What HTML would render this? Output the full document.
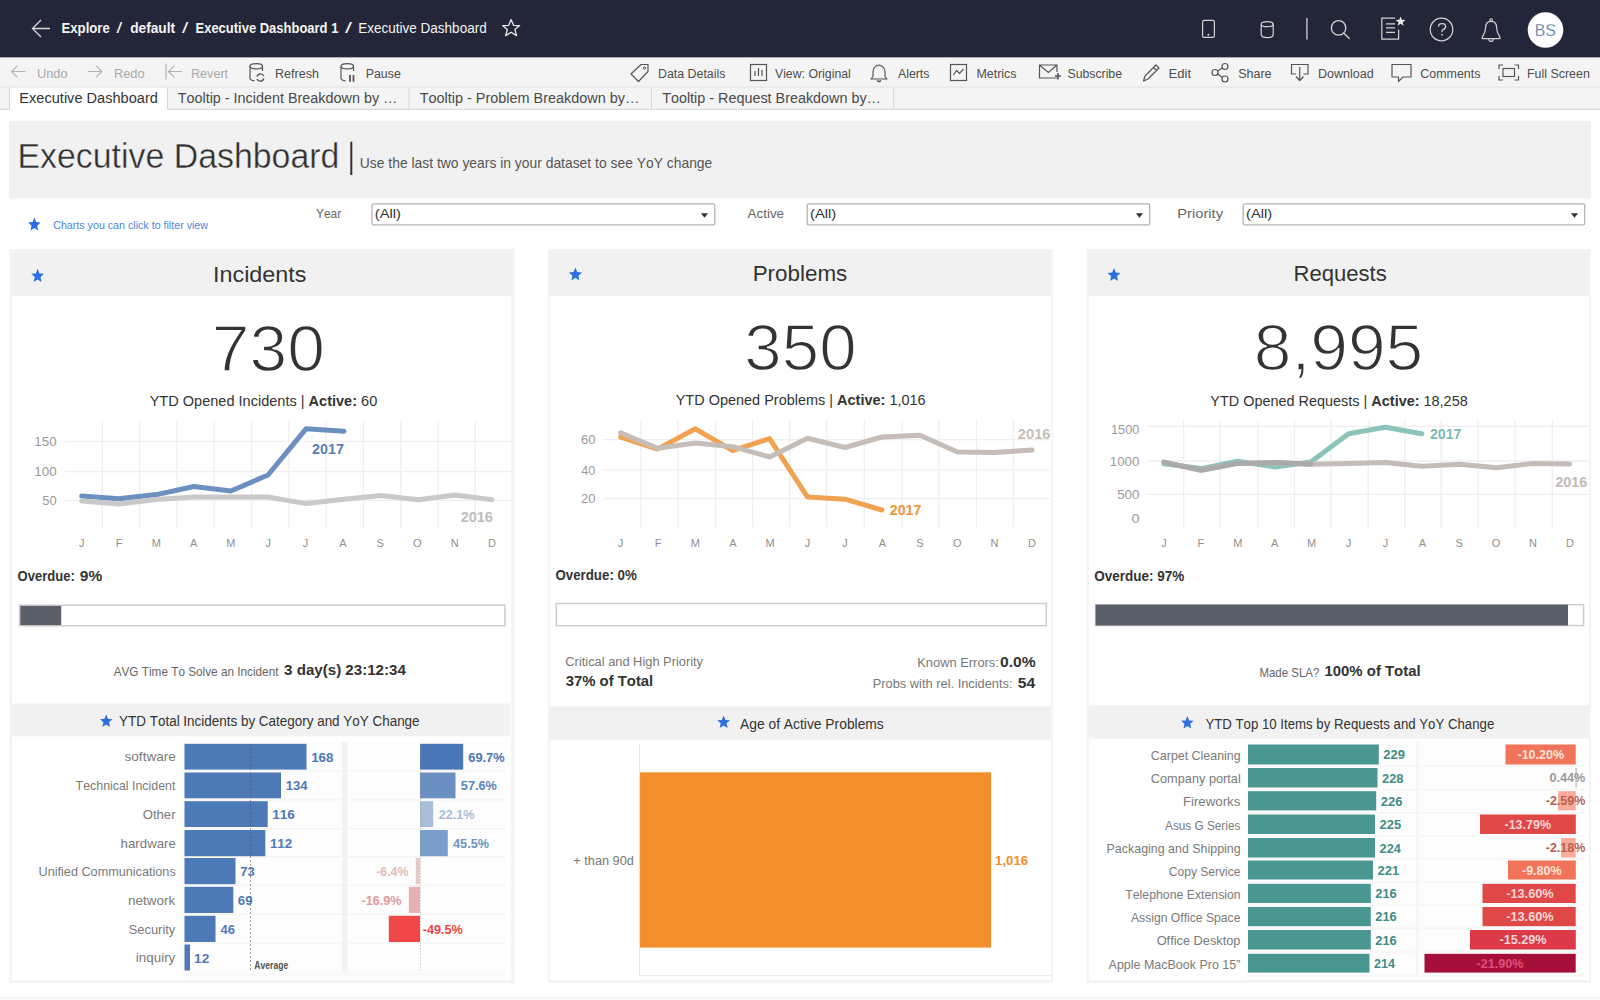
<!DOCTYPE html><html><head><meta charset="utf-8"><title>Executive Dashboard</title>
<style>html,body{margin:0;padding:0;background:#fff;width:1600px;height:1000px;overflow:hidden}svg{display:block;font-family:"Liberation Sans",sans-serif;font-kerning:none}</style></head><body>
<svg width="1600" height="1000" viewBox="0 0 1600 1000">
<rect x="0.0" y="0.0" width="1600.0" height="57.6" fill="#232638"/>
<path d="M50 28.5 H33 M41 20 L32.5 28.5 L41 37" fill="none" stroke="#d8d8d8" stroke-width="1.3"/>
<text x="61.52" y="33.20" font-size="14" fill="#f4f4f4" font-weight="bold" text-anchor="start" textLength="48.23" lengthAdjust="spacingAndGlyphs">Explore</text>
<text x="116.60" y="33.20" font-size="14" fill="#f4f4f4" font-weight="normal" text-anchor="start" textLength="5.70" lengthAdjust="spacingAndGlyphs">/</text>
<text x="130.14" y="33.20" font-size="14" fill="#f4f4f4" font-weight="bold" text-anchor="start" textLength="45.03" lengthAdjust="spacingAndGlyphs">default</text>
<text x="182.00" y="33.20" font-size="14" fill="#f4f4f4" font-weight="normal" text-anchor="start" textLength="6.30" lengthAdjust="spacingAndGlyphs">/</text>
<text x="195.53" y="33.20" font-size="14" fill="#f4f4f4" font-weight="bold" text-anchor="start" textLength="142.83" lengthAdjust="spacingAndGlyphs">Executive Dashboard 1</text>
<text x="345.00" y="33.20" font-size="14" fill="#f4f4f4" font-weight="normal" text-anchor="start" textLength="7.00" lengthAdjust="spacingAndGlyphs">/</text>
<text x="358.29" y="33.20" font-size="14" fill="#f4f4f4" font-weight="normal" text-anchor="start" textLength="128.38" lengthAdjust="spacingAndGlyphs">Executive Dashboard</text>
<path d="M511.1 19.5 L513.5 25.3 L519.6 25.6 L514.9 29.5 L516.5 35.6 L511.1 32.2 L505.7 35.6 L507.3 29.5 L502.6 25.6 L508.7 25.3 Z" fill="none" stroke="#e6e6e6" stroke-width="1.3" stroke-linejoin="round"/>
<rect x="1202.6" y="20.4" width="11.8" height="17" rx="1.6" fill="none" stroke="#d4d4d4" stroke-width="1.2"/><circle cx="1208.4" cy="34.8" r="0.95" fill="#d4d4d4"/>
<path d="M1261.2 24.5 V34.6 Q1261.2 37.6 1267.2 37.6 Q1273.2 37.6 1273.2 34.6 V24.5" fill="none" stroke="#d4d4d4" stroke-width="1.2"/><ellipse cx="1267.2" cy="24.2" rx="6" ry="2.5" fill="none" stroke="#d4d4d4" stroke-width="1.2"/>
<line x1="1306.9" y1="18.0" x2="1306.9" y2="39.6" stroke="#d4d4d4" stroke-width="1.3"/>
<circle cx="1338.6" cy="27.9" r="7.2" fill="none" stroke="#d4d4d4" stroke-width="1.3"/><path d="M1343.8 33.2 L1349.6 38.8" stroke="#d4d4d4" stroke-width="1.4"/>
<path d="M1395 18.2 H1381.8 V39.2 H1398.6 V29.5" fill="none" stroke="#d4d4d4" stroke-width="1.2"/><path d="M1386 23.8 H1395 M1386 27.9 H1395 M1386 32.3 H1395" stroke="#d4d4d4" stroke-width="1.3"/>
<polygon points="1400.60,16.40 1401.89,19.82 1405.55,19.99 1402.69,22.28 1403.66,25.81 1400.60,23.80 1397.54,25.81 1398.51,22.28 1395.65,19.99 1399.31,19.82" fill="#e8e8e8"/>
<circle cx="1441.5" cy="29.5" r="11.3" fill="none" stroke="#d4d4d4" stroke-width="1.2"/><path d="M1438.6 26.6 Q1438.4 23.6 1442 23.6 Q1445.6 23.6 1445.6 26.4 Q1445.6 28.4 1442.6 29.8 Q1442 30.2 1442 32.2" fill="none" stroke="#d4d4d4" stroke-width="1.3"/><circle cx="1442" cy="34.8" r="0.9" fill="#d4d4d4"/>
<circle cx="1491.1" cy="20" r="1.3" fill="none" stroke="#d4d4d4" stroke-width="1.1"/><path d="M1483.2 38.6 Q1481.3 38.6 1482.6 36.6 Q1485.6 32.4 1485.6 27.6 Q1485.6 21.3 1491.1 21.3 Q1496.6 21.3 1496.6 27.6 Q1496.6 32.4 1499.6 36.6 Q1500.9 38.6 1499 38.6 Z" fill="none" stroke="#d4d4d4" stroke-width="1.2" stroke-linejoin="round"/><path d="M1488.9 39 Q1488.9 41.4 1491.1 41.4 Q1493.3 41.4 1493.3 39" fill="none" stroke="#d4d4d4" stroke-width="1.1"/>
<circle cx="1545.5" cy="30" r="17.8" fill="#ffffff"/>
<text x="1534.75" y="35.50" font-size="16" fill="#3d6898" font-weight="normal" text-anchor="start" textLength="21.13" lengthAdjust="spacingAndGlyphs" stroke="#fff" stroke-width="0.3">BS</text>
<rect x="0.0" y="57.6" width="1600.0" height="29.4" fill="#f4f4f4"/>
<line x1="0.0" y1="87.2" x2="1600.0" y2="87.2" stroke="#d9d9d9" stroke-width="1"/>
<text x="37.02" y="77.60" font-size="12.5" fill="#a9a9a9" font-weight="normal" text-anchor="start" textLength="30.52" lengthAdjust="spacingAndGlyphs">Undo</text>
<text x="113.95" y="77.60" font-size="12.5" fill="#a9a9a9" font-weight="normal" text-anchor="start" textLength="30.59" lengthAdjust="spacingAndGlyphs">Redo</text>
<text x="190.97" y="77.60" font-size="12.5" fill="#a9a9a9" font-weight="normal" text-anchor="start" textLength="37.13" lengthAdjust="spacingAndGlyphs">Revert</text>
<text x="275.07" y="77.60" font-size="12.5" fill="#4d4d4d" font-weight="normal" text-anchor="start" textLength="43.84" lengthAdjust="spacingAndGlyphs">Refresh</text>
<text x="365.68" y="77.60" font-size="12.5" fill="#4d4d4d" font-weight="normal" text-anchor="start" textLength="35.17" lengthAdjust="spacingAndGlyphs">Pause</text>
<text x="657.98" y="77.60" font-size="12.5" fill="#4d4d4d" font-weight="normal" text-anchor="start" textLength="67.46" lengthAdjust="spacingAndGlyphs">Data Details</text>
<text x="774.95" y="77.60" font-size="12.5" fill="#4d4d4d" font-weight="normal" text-anchor="start" textLength="75.88" lengthAdjust="spacingAndGlyphs">View: Original</text>
<text x="897.98" y="77.60" font-size="12.5" fill="#4d4d4d" font-weight="normal" text-anchor="start" textLength="31.47" lengthAdjust="spacingAndGlyphs">Alerts</text>
<text x="976.48" y="77.60" font-size="12.5" fill="#4d4d4d" font-weight="normal" text-anchor="start" textLength="39.97" lengthAdjust="spacingAndGlyphs">Metrics</text>
<text x="1067.44" y="77.60" font-size="12.5" fill="#4d4d4d" font-weight="normal" text-anchor="start" textLength="54.60" lengthAdjust="spacingAndGlyphs">Subscribe</text>
<text x="1168.53" y="77.60" font-size="12.5" fill="#4d4d4d" font-weight="normal" text-anchor="start" textLength="22.57" lengthAdjust="spacingAndGlyphs">Edit</text>
<text x="1238.23" y="77.60" font-size="12.5" fill="#4d4d4d" font-weight="normal" text-anchor="start" textLength="33.32" lengthAdjust="spacingAndGlyphs">Share</text>
<text x="1317.97" y="77.60" font-size="12.5" fill="#4d4d4d" font-weight="normal" text-anchor="start" textLength="55.84" lengthAdjust="spacingAndGlyphs">Download</text>
<text x="1420.37" y="77.60" font-size="12.5" fill="#4d4d4d" font-weight="normal" text-anchor="start" textLength="60.08" lengthAdjust="spacingAndGlyphs">Comments</text>
<text x="1526.98" y="77.60" font-size="12.5" fill="#4d4d4d" font-weight="normal" text-anchor="start" textLength="62.83" lengthAdjust="spacingAndGlyphs">Full Screen</text>
<path d="M25.6 71.5 H11.6 M17.4 65.7 L11.6 71.5 L17.4 77.3" fill="none" stroke="#b3b3b3" stroke-width="1.2"/>
<path d="M87.8 71.5 H101.8 M96 65.7 L101.8 71.5 L96 77.3" fill="none" stroke="#b3b3b3" stroke-width="1.2"/>
<path d="M166 63.8 V79.6 M182 71.5 H168.6 M174.4 65.7 L168.6 71.5 L174.4 77.3" fill="none" stroke="#b3b3b3" stroke-width="1.2"/>
<path d="M250 66.5 V78 Q250 80.3 254.5 80.8 M262.5 66.5 V71" fill="none" stroke="#555555" stroke-width="1.2"/><ellipse cx="256.25" cy="66.3" rx="6.25" ry="2.6" fill="none" stroke="#555555" stroke-width="1.2"/><path d="M257 76.5 A3.6 3.6 0 0 1 263.8 76 M263.8 78.5 A3.6 3.6 0 0 1 257 79" fill="none" stroke="#555555" stroke-width="1.3"/>
<path d="M341 66.5 V78 Q341 80.3 345.5 80.8 M353.5 66.5 V71" fill="none" stroke="#555555" stroke-width="1.2"/><ellipse cx="347.25" cy="66.3" rx="6.25" ry="2.6" fill="none" stroke="#555555" stroke-width="1.2"/><path d="M350 74.9 V81.8 M353.5 74.9 V81.8" stroke="#555555" stroke-width="1.8"/>
<path d="M631 74 L641 64.5 H648 V71.5 L638.5 81.5 Z" fill="none" stroke="#555555" stroke-width="1.2" stroke-linejoin="round"/><circle cx="644.5" cy="68" r="1.2" fill="none" stroke="#555555" stroke-width="1"/>
<rect x="750.5" y="64.5" width="16" height="16" fill="none" stroke="#555555" stroke-width="1.2"/><path d="M755 76 V71 M758.5 76 V68 M762 76 V70" stroke="#555555" stroke-width="1.2"/>
<path d="M871 79 H887 L885 76.5 V72 Q885 66.5 879 65 Q873 66.5 873 72 V76.5 Z" fill="none" stroke="#555555" stroke-width="1.2" stroke-linejoin="round"/><path d="M877 80.5 Q879 82.5 881 80.5" fill="none" stroke="#555555" stroke-width="1.2"/>
<rect x="950.5" y="64.5" width="16" height="16" fill="none" stroke="#555555" stroke-width="1.2"/><path d="M953.5 75 L956.5 70.5 L959.5 73.5 L963.5 69" fill="none" stroke="#555555" stroke-width="1.2"/>
<path d="M1057 78 H1039.5 V65 H1057 V72 M1039.5 65 L1048.3 72.5 L1057 65" fill="none" stroke="#555555" stroke-width="1.2"/><path d="M1055 76 H1061 M1058 73 V79.5" stroke="#555555" stroke-width="1.6"/>
<path d="M1143.5 81 L1145 76 L1156 65 L1159 68 L1148 79 Z M1153.5 67.5 L1156.5 70.5" fill="none" stroke="#555555" stroke-width="1.2" stroke-linejoin="round"/>
<circle cx="1215" cy="72.5" r="3" fill="none" stroke="#555555" stroke-width="1.2"/><circle cx="1225" cy="66.5" r="3" fill="none" stroke="#555555" stroke-width="1.2"/><circle cx="1225" cy="79" r="3" fill="none" stroke="#555555" stroke-width="1.2"/><path d="M1217.6 71 L1222.4 68 M1217.6 74 L1222.4 77.5" stroke="#555555" stroke-width="1.2"/>
<path d="M1296 74 H1291.5 V64.5 H1308 V74 H1303.5 M1299.75 67 V80 M1296 76.5 L1299.75 80.5 L1303.5 76.5" fill="none" stroke="#555555" stroke-width="1.2"/>
<path d="M1392 64.5 H1411 V77 H1403 L1398.5 81.5 V77 H1392 Z" fill="none" stroke="#555555" stroke-width="1.2" stroke-linejoin="round"/>
<path d="M1499 69 V65 H1503 M1514.5 65 H1518.5 V69 M1518.5 76 V80 H1514.5 M1503 80 H1499 V76" fill="none" stroke="#555555" stroke-width="1.2"/><rect x="1503" y="68.5" width="11.5" height="8" fill="none" stroke="#555555" stroke-width="1.2"/>
<rect x="0.0" y="87.7" width="1600.0" height="21.8" fill="#f4f4f4"/>
<line x1="0.0" y1="109.3" x2="1600.0" y2="109.3" stroke="#d6d6d6" stroke-width="1"/>
<rect x="9.5" y="87.7" width="158.0" height="22.8" fill="#ffffff"/>
<line x1="9.5" y1="88.0" x2="9.5" y2="109.5" stroke="#d6d6d6" stroke-width="1"/>
<line x1="167.5" y1="88.0" x2="167.5" y2="109.5" stroke="#d6d6d6" stroke-width="1"/>
<line x1="409.0" y1="88.0" x2="409.0" y2="109.5" stroke="#d6d6d6" stroke-width="1"/>
<line x1="651.5" y1="88.0" x2="651.5" y2="109.5" stroke="#d6d6d6" stroke-width="1"/>
<line x1="893.7" y1="88.0" x2="893.7" y2="109.5" stroke="#d6d6d6" stroke-width="1"/>
<text x="19.30" y="103.30" font-size="13.8" fill="#333" font-weight="normal" text-anchor="start" textLength="138.64" lengthAdjust="spacingAndGlyphs">Executive Dashboard</text>
<text x="177.68" y="103.30" font-size="13.8" fill="#4a4a4a" font-weight="normal" text-anchor="start" textLength="219.77" lengthAdjust="spacingAndGlyphs">Tooltip - Incident Breakdown by …</text>
<text x="419.68" y="103.30" font-size="13.8" fill="#4a4a4a" font-weight="normal" text-anchor="start" textLength="219.78" lengthAdjust="spacingAndGlyphs">Tooltip - Problem Breakdown by…</text>
<text x="662.18" y="103.30" font-size="13.8" fill="#4a4a4a" font-weight="normal" text-anchor="start" textLength="218.77" lengthAdjust="spacingAndGlyphs">Tooltip - Request Breakdown by…</text>
<rect x="9.0" y="121.0" width="1582.0" height="77.5" fill="#f1f1f1"/>
<text x="17.52" y="168.00" font-size="34.9" fill="#2f2f2f" font-weight="normal" text-anchor="start" textLength="321.86" lengthAdjust="spacingAndGlyphs" stroke="#f1f1f1" stroke-width="0.4">Executive Dashboard</text>
<rect x="350.3" y="141.7" width="2.0" height="33.3" fill="#333"/>
<text x="359.83" y="168.30" font-size="15" fill="#555" font-weight="normal" text-anchor="start" textLength="352.49" lengthAdjust="spacingAndGlyphs">Use the last two years in your dataset to see YoY change</text>
<polygon points="34.35,217.50 36.09,222.11 40.60,222.50 37.16,225.75 38.21,230.60 34.35,228.00 30.49,230.60 31.54,225.75 28.10,222.50 32.61,222.11" fill="#2a6be8"/>
<text x="53.21" y="228.75" font-size="11.3" fill="#4a86e0" font-weight="normal" text-anchor="start" textLength="154.82" lengthAdjust="spacingAndGlyphs">Charts you can click to filter view</text>
<text x="315.99" y="217.90" font-size="12.8" fill="#666" font-weight="normal" text-anchor="start" textLength="25.21" lengthAdjust="spacingAndGlyphs">Year</text>
<rect x="372.0" y="203.9" width="342.8" height="21" rx="1.5" fill="#fff" stroke="#b3b3b3" stroke-width="1.3"/>
<text x="374.73" y="218.30" font-size="12.6" fill="#333" font-weight="normal" text-anchor="start" textLength="26.23" lengthAdjust="spacingAndGlyphs">(All)</text>
<path d="M700.9 213.2 H708.1 L704.5 217.8 Z" fill="#333"/>
<text x="747.47" y="217.90" font-size="12.8" fill="#666" font-weight="normal" text-anchor="start" textLength="36.62" lengthAdjust="spacingAndGlyphs">Active</text>
<rect x="807.2" y="203.9" width="342.5" height="21" rx="1.5" fill="#fff" stroke="#b3b3b3" stroke-width="1.3"/>
<text x="809.98" y="218.30" font-size="12.6" fill="#333" font-weight="normal" text-anchor="start" textLength="26.23" lengthAdjust="spacingAndGlyphs">(All)</text>
<path d="M1135.9 213.2 H1143.1 L1139.5 217.8 Z" fill="#333"/>
<text x="1177.29" y="217.90" font-size="12.8" fill="#666" font-weight="normal" text-anchor="start" textLength="45.73" lengthAdjust="spacingAndGlyphs">Priority</text>
<rect x="1243.2" y="203.9" width="341.5" height="21" rx="1.5" fill="#fff" stroke="#b3b3b3" stroke-width="1.3"/>
<text x="1245.98" y="218.30" font-size="12.6" fill="#333" font-weight="normal" text-anchor="start" textLength="26.23" lengthAdjust="spacingAndGlyphs">(All)</text>
<path d="M1570.9 213.2 H1578.1 L1574.5 217.8 Z" fill="#333"/>
<rect x="9.0" y="249.0" width="505.4" height="734.0" fill="#f4f4f4"/>
<rect x="12.0" y="252.0" width="499.2" height="728.0" fill="#ffffff"/>
<rect x="12.0" y="252.0" width="499.2" height="44.0" fill="#f1f1f1"/>
<rect x="547.8" y="249.0" width="505.0" height="734.0" fill="#f4f4f4"/>
<rect x="549.8" y="252.0" width="501.0" height="728.0" fill="#ffffff"/>
<rect x="549.8" y="252.0" width="501.0" height="44.0" fill="#f1f1f1"/>
<rect x="1086.8" y="249.0" width="504.2" height="734.0" fill="#f4f4f4"/>
<rect x="1088.8" y="252.0" width="500.2" height="728.0" fill="#ffffff"/>
<rect x="1088.8" y="252.0" width="500.2" height="44.0" fill="#f1f1f1"/>
<polygon points="37.60,268.80 39.38,273.44 44.00,273.84 40.48,277.11 41.56,282.00 37.60,279.38 33.64,282.00 34.72,277.11 31.20,273.84 35.82,273.44" fill="#2b6fe0"/>
<text x="213.05" y="282.00" font-size="22" fill="#333" font-weight="normal" text-anchor="start" textLength="93.29" lengthAdjust="spacingAndGlyphs">Incidents</text>
<text x="211.77" y="371.20" font-size="65" fill="#333" font-weight="normal" text-anchor="start" textLength="113.12" lengthAdjust="spacingAndGlyphs" stroke="#fff" stroke-width="1.5">730</text>
<text x="149.68" y="406.40" font-size="14.5" fill="#333" textLength="227.59" lengthAdjust="spacingAndGlyphs"><tspan font-weight="normal">YTD Opened Incidents | </tspan><tspan font-weight="bold">Active:</tspan><tspan font-weight="normal"> 60</tspan></text>
<line x1="102.3" y1="421.5" x2="102.3" y2="528.7" stroke="#efefef" stroke-width="1.3"/>
<line x1="139.6" y1="421.5" x2="139.6" y2="528.7" stroke="#efefef" stroke-width="1.3"/>
<line x1="176.9" y1="421.5" x2="176.9" y2="528.7" stroke="#efefef" stroke-width="1.3"/>
<line x1="214.2" y1="421.5" x2="214.2" y2="528.7" stroke="#efefef" stroke-width="1.3"/>
<line x1="251.5" y1="421.5" x2="251.5" y2="528.7" stroke="#efefef" stroke-width="1.3"/>
<line x1="288.8" y1="421.5" x2="288.8" y2="528.7" stroke="#efefef" stroke-width="1.3"/>
<line x1="326.1" y1="421.5" x2="326.1" y2="528.7" stroke="#efefef" stroke-width="1.3"/>
<line x1="363.4" y1="421.5" x2="363.4" y2="528.7" stroke="#efefef" stroke-width="1.3"/>
<line x1="400.7" y1="421.5" x2="400.7" y2="528.7" stroke="#efefef" stroke-width="1.3"/>
<line x1="438.0" y1="421.5" x2="438.0" y2="528.7" stroke="#efefef" stroke-width="1.3"/>
<line x1="475.3" y1="421.5" x2="475.3" y2="528.7" stroke="#efefef" stroke-width="1.3"/>
<line x1="64.7" y1="441.3" x2="511.0" y2="441.3" stroke="#efefef" stroke-width="1.3"/>
<line x1="64.7" y1="471.5" x2="511.0" y2="471.5" stroke="#efefef" stroke-width="1.3"/>
<line x1="64.7" y1="500.3" x2="511.0" y2="500.3" stroke="#efefef" stroke-width="1.3"/>
<text x="34.38" y="445.60" font-size="12.7" fill="#9a9a9a" font-weight="normal" text-anchor="start" textLength="22.24" lengthAdjust="spacingAndGlyphs">150</text>
<text x="34.38" y="475.60" font-size="12.7" fill="#9a9a9a" font-weight="normal" text-anchor="start" textLength="22.24" lengthAdjust="spacingAndGlyphs">100</text>
<text x="42.18" y="504.60" font-size="12.7" fill="#9a9a9a" font-weight="normal" text-anchor="start" textLength="14.43" lengthAdjust="spacingAndGlyphs">50</text>
<text x="81.70" y="547.40" font-size="11" fill="#8f8f8f" font-weight="normal" text-anchor="middle">J</text>
<text x="119.00" y="547.40" font-size="11" fill="#8f8f8f" font-weight="normal" text-anchor="middle">F</text>
<text x="156.30" y="547.40" font-size="11" fill="#8f8f8f" font-weight="normal" text-anchor="middle">M</text>
<text x="193.60" y="547.40" font-size="11" fill="#8f8f8f" font-weight="normal" text-anchor="middle">A</text>
<text x="230.90" y="547.40" font-size="11" fill="#8f8f8f" font-weight="normal" text-anchor="middle">M</text>
<text x="268.20" y="547.40" font-size="11" fill="#8f8f8f" font-weight="normal" text-anchor="middle">J</text>
<text x="305.50" y="547.40" font-size="11" fill="#8f8f8f" font-weight="normal" text-anchor="middle">J</text>
<text x="342.80" y="547.40" font-size="11" fill="#8f8f8f" font-weight="normal" text-anchor="middle">A</text>
<text x="380.10" y="547.40" font-size="11" fill="#8f8f8f" font-weight="normal" text-anchor="middle">S</text>
<text x="417.40" y="547.40" font-size="11" fill="#8f8f8f" font-weight="normal" text-anchor="middle">O</text>
<text x="454.70" y="547.40" font-size="11" fill="#8f8f8f" font-weight="normal" text-anchor="middle">N</text>
<text x="492.00" y="547.40" font-size="11" fill="#8f8f8f" font-weight="normal" text-anchor="middle">D</text>
<polyline points="81.7,496.0 118.6,498.7 156.5,494.6 193.9,486.5 230.9,491.0 268.0,475.0 306.0,428.8 344.0,431.2" fill="none" stroke="#6b90bf" stroke-width="5" stroke-linejoin="round" stroke-linecap="round"/>
<polyline points="81.7,501.0 118.6,504.0 156.5,499.5 193.9,497.0 230.9,497.0 268.0,497.0 306.0,503.6 344.0,499.2 380.8,495.4 418.2,499.8 454.7,495.0 492.0,499.8" fill="none" stroke="#c9c9c9" stroke-width="5" stroke-linejoin="round" stroke-linecap="round"/>
<text x="312.10" y="453.50" font-size="14.3" fill="#5b80b5" font-weight="bold" text-anchor="start" textLength="31.93" lengthAdjust="spacingAndGlyphs">2017</text>
<text x="460.70" y="522.20" font-size="14.3" fill="#bdbdbd" font-weight="bold" text-anchor="start" textLength="32.23" lengthAdjust="spacingAndGlyphs">2016</text>
<text x="17.56" y="581.10" font-size="14" fill="#333" font-weight="bold" text-anchor="start" textLength="57.29" lengthAdjust="spacingAndGlyphs">Overdue:</text>
<text x="79.76" y="581.10" font-size="14" fill="#333" font-weight="bold" text-anchor="start" textLength="22.45" lengthAdjust="spacingAndGlyphs">9%</text>
<rect x="19.6" y="605.2" width="485.3" height="20.6" fill="#fff" stroke="#cdcdcd" stroke-width="1.5"/>
<rect x="20.3" y="605.9" width="40.9" height="19.2" fill="#5b5f69"/>
<text x="113.68" y="675.70" font-size="13.5" fill="#666" font-weight="normal" text-anchor="start" textLength="164.81" lengthAdjust="spacingAndGlyphs">AVG Time To Solve an Incident</text>
<text x="284.05" y="675.30" font-size="15.5" fill="#333" font-weight="bold" text-anchor="start" textLength="121.83" lengthAdjust="spacingAndGlyphs">3 day(s) 23:12:34</text>
<rect x="12.0" y="703.5" width="498.0" height="32.8" fill="#f1f1f1"/>
<polygon points="106.20,714.40 107.92,718.83 112.40,719.21 108.99,722.33 110.03,727.00 106.20,724.50 102.37,727.00 103.41,722.33 100.00,719.21 104.48,718.83" fill="#2b6fe0"/>
<text x="119.10" y="725.70" font-size="14" fill="#333" font-weight="normal" text-anchor="start" textLength="300.49" lengthAdjust="spacingAndGlyphs">YTD Total Incidents by Category and YoY Change</text>
<rect x="182.0" y="742.0" width="160.0" height="230.3" fill="#fdfdfd"/>
<rect x="342.0" y="742.0" width="5.8" height="230.3" fill="#f3f3f3"/>
<rect x="347.8" y="742.0" width="157.7" height="230.3" fill="#fdfdfd"/>
<rect x="182.0" y="972.3" width="323.5" height="3.9" fill="#f9f9f9"/>
<line x1="182.0" y1="771.1" x2="342.0" y2="771.1" stroke="#f3f3f3" stroke-width="1.2"/>
<line x1="347.8" y1="771.1" x2="505.5" y2="771.1" stroke="#f3f3f3" stroke-width="1.2"/>
<line x1="182.0" y1="799.9" x2="342.0" y2="799.9" stroke="#f3f3f3" stroke-width="1.2"/>
<line x1="347.8" y1="799.9" x2="505.5" y2="799.9" stroke="#f3f3f3" stroke-width="1.2"/>
<line x1="182.0" y1="828.6" x2="342.0" y2="828.6" stroke="#f3f3f3" stroke-width="1.2"/>
<line x1="347.8" y1="828.6" x2="505.5" y2="828.6" stroke="#f3f3f3" stroke-width="1.2"/>
<line x1="182.0" y1="856.6" x2="342.0" y2="856.6" stroke="#f3f3f3" stroke-width="1.2"/>
<line x1="347.8" y1="856.6" x2="505.5" y2="856.6" stroke="#f3f3f3" stroke-width="1.2"/>
<line x1="182.0" y1="885.4" x2="342.0" y2="885.4" stroke="#f3f3f3" stroke-width="1.2"/>
<line x1="347.8" y1="885.4" x2="505.5" y2="885.4" stroke="#f3f3f3" stroke-width="1.2"/>
<line x1="182.0" y1="914.4" x2="342.0" y2="914.4" stroke="#f3f3f3" stroke-width="1.2"/>
<line x1="347.8" y1="914.4" x2="505.5" y2="914.4" stroke="#f3f3f3" stroke-width="1.2"/>
<line x1="182.0" y1="943.1" x2="342.0" y2="943.1" stroke="#f3f3f3" stroke-width="1.2"/>
<line x1="347.8" y1="943.1" x2="505.5" y2="943.1" stroke="#f3f3f3" stroke-width="1.2"/>
<rect x="184.5" y="743.8" width="122.0" height="25.8" fill="#4e79b7"/>
<text x="124.52" y="761.27" font-size="13" fill="#7a7a7a" font-weight="normal" text-anchor="start" textLength="51.38" lengthAdjust="spacingAndGlyphs">software</text>
<text x="311.16" y="761.73" font-size="13" fill="#4e79b7" font-weight="bold" text-anchor="start" textLength="22.25" lengthAdjust="spacingAndGlyphs">168</text>
<rect x="184.5" y="772.5" width="96.5" height="25.8" fill="#4e79b7"/>
<text x="75.62" y="790.02" font-size="13" fill="#7a7a7a" font-weight="normal" text-anchor="start" textLength="99.77" lengthAdjust="spacingAndGlyphs">Technical Incident</text>
<text x="285.67" y="790.48" font-size="13" fill="#4e79b7" font-weight="bold" text-anchor="start" textLength="21.90" lengthAdjust="spacingAndGlyphs">134</text>
<rect x="184.5" y="801.2" width="83.2" height="25.8" fill="#4e79b7"/>
<text x="142.78" y="818.77" font-size="13" fill="#7a7a7a" font-weight="normal" text-anchor="start" textLength="32.74" lengthAdjust="spacingAndGlyphs">Other</text>
<text x="272.15" y="819.23" font-size="13" fill="#4e79b7" font-weight="bold" text-anchor="start" textLength="22.59" lengthAdjust="spacingAndGlyphs">116</text>
<rect x="184.5" y="830.0" width="80.8" height="26.2" fill="#4e79b7"/>
<text x="120.58" y="847.77" font-size="13" fill="#7a7a7a" font-weight="normal" text-anchor="start" textLength="55.31" lengthAdjust="spacingAndGlyphs">hardware</text>
<text x="269.91" y="848.23" font-size="13" fill="#4e79b7" font-weight="bold" text-anchor="start" textLength="22.38" lengthAdjust="spacingAndGlyphs">112</text>
<rect x="184.5" y="858.0" width="51.0" height="26.2" fill="#4e79b7"/>
<text x="38.52" y="875.77" font-size="13" fill="#7a7a7a" font-weight="normal" text-anchor="start" textLength="137.23" lengthAdjust="spacingAndGlyphs">Unified Communications</text>
<text x="240.19" y="876.23" font-size="13" fill="#4e79b7" font-weight="bold" text-anchor="start" textLength="14.53" lengthAdjust="spacingAndGlyphs">73</text>
<rect x="184.5" y="886.8" width="48.8" height="26.2" fill="#4e79b7"/>
<text x="128.00" y="904.52" font-size="13" fill="#7a7a7a" font-weight="normal" text-anchor="start" textLength="47.28" lengthAdjust="spacingAndGlyphs">network</text>
<text x="237.77" y="904.98" font-size="13" fill="#4e79b7" font-weight="bold" text-anchor="start" textLength="14.73" lengthAdjust="spacingAndGlyphs">69</text>
<rect x="184.5" y="915.8" width="31.0" height="26.2" fill="#4e79b7"/>
<text x="128.71" y="933.52" font-size="13" fill="#7a7a7a" font-weight="normal" text-anchor="start" textLength="46.61" lengthAdjust="spacingAndGlyphs">Security</text>
<text x="220.55" y="933.98" font-size="13" fill="#4e79b7" font-weight="bold" text-anchor="start" textLength="14.41" lengthAdjust="spacingAndGlyphs">46</text>
<rect x="184.5" y="944.5" width="5.5" height="26.0" fill="#4e79b7"/>
<text x="135.80" y="962.15" font-size="13" fill="#7a7a7a" font-weight="normal" text-anchor="start" textLength="39.52" lengthAdjust="spacingAndGlyphs">inquiry</text>
<text x="194.14" y="962.60" font-size="13" fill="#4e79b7" font-weight="bold" text-anchor="start" textLength="15.15" lengthAdjust="spacingAndGlyphs">12</text>
<line x1="250.5" y1="744.0" x2="250.5" y2="971.0" stroke="#555" stroke-width="0.8" stroke-dasharray="2,2" opacity="0.7"/>
<text x="254.29" y="968.70" font-size="10.9" fill="#555" font-weight="bold" text-anchor="start" textLength="34.01" lengthAdjust="spacingAndGlyphs">Average</text>
<rect x="420.0" y="743.8" width="43.2" height="25.8" fill="#4a76b5"/>
<text x="468.28" y="761.73" font-size="13" fill="#4a76b5" font-weight="bold" text-anchor="start" textLength="36.31" lengthAdjust="spacingAndGlyphs">69.7%</text>
<rect x="420.0" y="772.5" width="35.5" height="25.8" fill="#6a8fc0"/>
<text x="460.86" y="790.48" font-size="13" fill="#5a84bd" font-weight="bold" text-anchor="start" textLength="35.97" lengthAdjust="spacingAndGlyphs">57.6%</text>
<rect x="420.0" y="801.2" width="13.2" height="25.8" fill="#a9bdd9"/>
<text x="438.81" y="819.23" font-size="13" fill="#a9bdd9" font-weight="bold" text-anchor="start" textLength="35.77" lengthAdjust="spacingAndGlyphs">22.1%</text>
<rect x="420.0" y="830.0" width="27.8" height="26.2" fill="#7b9dcb"/>
<text x="453.06" y="848.23" font-size="13" fill="#6f94c6" font-weight="bold" text-anchor="start" textLength="36.03" lengthAdjust="spacingAndGlyphs">45.5%</text>
<rect x="415.8" y="858.0" width="4.2" height="26.2" fill="#e9c8c8"/>
<text x="376.27" y="876.23" font-size="13" fill="#e3baba" font-weight="bold" text-anchor="start" textLength="32.05" lengthAdjust="spacingAndGlyphs">-6.4%</text>
<rect x="408.8" y="886.8" width="11.2" height="26.2" fill="#e8b2b2"/>
<text x="361.51" y="904.98" font-size="13" fill="#e09a9a" font-weight="bold" text-anchor="start" textLength="40.08" lengthAdjust="spacingAndGlyphs">-16.9%</text>
<rect x="388.8" y="915.8" width="31.2" height="26.2" fill="#f04848"/>
<text x="422.76" y="933.98" font-size="13" fill="#ef4545" font-weight="bold" text-anchor="start" textLength="40.08" lengthAdjust="spacingAndGlyphs">-49.5%</text>
<line x1="420.5" y1="744.0" x2="420.5" y2="971.0" stroke="#999" stroke-width="0.8" stroke-dasharray="1.5,1.5" opacity="0.6"/>
<polygon points="575.40,267.60 577.24,272.10 582.00,272.49 578.37,275.66 579.48,280.40 575.40,277.86 571.32,280.40 572.43,275.66 568.80,272.49 573.56,272.10" fill="#2b6fe0"/>
<text x="752.66" y="281.20" font-size="22" fill="#333" font-weight="normal" text-anchor="start" textLength="94.65" lengthAdjust="spacingAndGlyphs">Problems</text>
<text x="744.39" y="370.40" font-size="65" fill="#333" font-weight="normal" text-anchor="start" textLength="112.19" lengthAdjust="spacingAndGlyphs" stroke="#fff" stroke-width="1.5">350</text>
<text x="675.68" y="405.20" font-size="14.5" fill="#333" textLength="249.95" lengthAdjust="spacingAndGlyphs"><tspan font-weight="normal">YTD Opened Problems | </tspan><tspan font-weight="bold">Active:</tspan><tspan font-weight="normal"> 1,016</tspan></text>
<line x1="640.8" y1="420.5" x2="640.8" y2="527.5" stroke="#efefef" stroke-width="1.3"/>
<line x1="677.8" y1="420.5" x2="677.8" y2="527.5" stroke="#efefef" stroke-width="1.3"/>
<line x1="715.5" y1="420.5" x2="715.5" y2="527.5" stroke="#efefef" stroke-width="1.3"/>
<line x1="752.6" y1="420.5" x2="752.6" y2="527.5" stroke="#efefef" stroke-width="1.3"/>
<line x1="789.6" y1="420.5" x2="789.6" y2="527.5" stroke="#efefef" stroke-width="1.3"/>
<line x1="826.6" y1="420.5" x2="826.6" y2="527.5" stroke="#efefef" stroke-width="1.3"/>
<line x1="864.4" y1="420.5" x2="864.4" y2="527.5" stroke="#efefef" stroke-width="1.3"/>
<line x1="902.1" y1="420.5" x2="902.1" y2="527.5" stroke="#efefef" stroke-width="1.3"/>
<line x1="938.7" y1="420.5" x2="938.7" y2="527.5" stroke="#efefef" stroke-width="1.3"/>
<line x1="976.5" y1="420.5" x2="976.5" y2="527.5" stroke="#efefef" stroke-width="1.3"/>
<line x1="1013.4" y1="420.5" x2="1013.4" y2="527.5" stroke="#efefef" stroke-width="1.3"/>
<line x1="603.0" y1="439.7" x2="1050.0" y2="439.7" stroke="#efefef" stroke-width="1.3"/>
<line x1="603.0" y1="469.9" x2="1050.0" y2="469.9" stroke="#efefef" stroke-width="1.3"/>
<line x1="603.0" y1="498.7" x2="1050.0" y2="498.7" stroke="#efefef" stroke-width="1.3"/>
<text x="580.94" y="444.40" font-size="12.7" fill="#9a9a9a" font-weight="normal" text-anchor="start" textLength="14.47" lengthAdjust="spacingAndGlyphs">60</text>
<text x="581.31" y="474.70" font-size="12.7" fill="#9a9a9a" font-weight="normal" text-anchor="start" textLength="14.09" lengthAdjust="spacingAndGlyphs">40</text>
<text x="580.95" y="503.40" font-size="12.7" fill="#9a9a9a" font-weight="normal" text-anchor="start" textLength="14.46" lengthAdjust="spacingAndGlyphs">20</text>
<text x="620.60" y="546.60" font-size="11" fill="#8f8f8f" font-weight="normal" text-anchor="middle">J</text>
<text x="658.00" y="546.60" font-size="11" fill="#8f8f8f" font-weight="normal" text-anchor="middle">F</text>
<text x="695.40" y="546.60" font-size="11" fill="#8f8f8f" font-weight="normal" text-anchor="middle">M</text>
<text x="732.80" y="546.60" font-size="11" fill="#8f8f8f" font-weight="normal" text-anchor="middle">A</text>
<text x="770.20" y="546.60" font-size="11" fill="#8f8f8f" font-weight="normal" text-anchor="middle">M</text>
<text x="807.60" y="546.60" font-size="11" fill="#8f8f8f" font-weight="normal" text-anchor="middle">J</text>
<text x="845.00" y="546.60" font-size="11" fill="#8f8f8f" font-weight="normal" text-anchor="middle">J</text>
<text x="882.40" y="546.60" font-size="11" fill="#8f8f8f" font-weight="normal" text-anchor="middle">A</text>
<text x="919.80" y="546.60" font-size="11" fill="#8f8f8f" font-weight="normal" text-anchor="middle">S</text>
<text x="957.20" y="546.60" font-size="11" fill="#8f8f8f" font-weight="normal" text-anchor="middle">O</text>
<text x="994.60" y="546.60" font-size="11" fill="#8f8f8f" font-weight="normal" text-anchor="middle">N</text>
<text x="1032.00" y="546.60" font-size="11" fill="#8f8f8f" font-weight="normal" text-anchor="middle">D</text>
<polyline points="620.6,437.0 657.5,449.1 695.4,428.8 732.7,450.7 769.6,438.6 807.5,497.0 845.0,499.2 881.8,510.0" fill="none" stroke="#f1a251" stroke-width="5" stroke-linejoin="round" stroke-linecap="round"/>
<polyline points="620.6,432.9 657.5,448.3 695.4,443.0 732.7,446.7 769.6,456.9 807.5,438.3 845.0,447.5 881.8,437.0 920.0,435.3 957.4,452.0 994.4,452.4 1032.1,450.0" fill="none" stroke="#c6bdb9" stroke-width="5" stroke-linejoin="round" stroke-linecap="round"/>
<text x="889.81" y="515.40" font-size="14.3" fill="#f0983c" font-weight="bold" text-anchor="start" textLength="31.62" lengthAdjust="spacingAndGlyphs">2017</text>
<text x="1017.79" y="438.60" font-size="14.3" fill="#c6bdb9" font-weight="bold" text-anchor="start" textLength="32.74" lengthAdjust="spacingAndGlyphs">2016</text>
<text x="555.45" y="580.00" font-size="14" fill="#333" font-weight="bold" text-anchor="start" textLength="81.30" lengthAdjust="spacingAndGlyphs">Overdue: 0%</text>
<rect x="556.3" y="603.5" width="490" height="22.2" fill="#fff" stroke="#cdcdcd" stroke-width="1.5"/>
<text x="565.35" y="665.90" font-size="13" fill="#777" font-weight="normal" text-anchor="start" textLength="137.68" lengthAdjust="spacingAndGlyphs">Critical and High Priority</text>
<text x="565.66" y="686.40" font-size="15.5" fill="#333" font-weight="bold" text-anchor="start" textLength="87.59" lengthAdjust="spacingAndGlyphs">37% of Total</text>
<text x="917.24" y="666.80" font-size="13" fill="#777" font-weight="normal" text-anchor="start" textLength="81.63" lengthAdjust="spacingAndGlyphs">Known Errors:</text>
<text x="999.98" y="666.80" font-size="15.5" fill="#333" font-weight="bold" text-anchor="start" textLength="35.63" lengthAdjust="spacingAndGlyphs">0.0%</text>
<text x="872.75" y="688.30" font-size="13" fill="#777" font-weight="normal" text-anchor="start" textLength="139.82" lengthAdjust="spacingAndGlyphs">Probs with rel. Incidents:</text>
<text x="1017.82" y="688.30" font-size="15.5" fill="#333" font-weight="bold" text-anchor="start" textLength="17.47" lengthAdjust="spacingAndGlyphs">54</text>
<rect x="549.8" y="706.4" width="501.0" height="33.3" fill="#f1f1f1"/>
<polygon points="723.65,715.50 725.44,719.89 730.10,720.27 726.55,723.37 727.64,728.00 723.65,725.52 719.66,728.00 720.75,723.37 717.20,720.27 721.86,719.89" fill="#2b6fe0"/>
<text x="739.97" y="728.80" font-size="14" fill="#333" font-weight="normal" text-anchor="start" textLength="143.83" lengthAdjust="spacingAndGlyphs">Age of Active Problems</text>
<rect x="639.8" y="772.3" width="351.3" height="175.3" fill="#f28e2b"/>
<line x1="639.6" y1="744.0" x2="639.6" y2="976.0" stroke="#dedede" stroke-width="1"/>
<line x1="639.6" y1="975.7" x2="1050.8" y2="975.7" stroke="#e6e6e6" stroke-width="1"/>
<text x="573.38" y="865.00" font-size="12.5" fill="#777" font-weight="normal" text-anchor="start" textLength="60.44" lengthAdjust="spacingAndGlyphs">+ than 90d</text>
<text x="995.07" y="865.00" font-size="12.5" fill="#f28e2b" font-weight="bold" text-anchor="start" textLength="33.11" lengthAdjust="spacingAndGlyphs">1,016</text>
<polygon points="1114.05,268.00 1115.84,272.57 1120.50,272.97 1116.95,276.19 1118.04,281.00 1114.05,278.42 1110.06,281.00 1111.15,276.19 1107.60,272.97 1112.26,272.57" fill="#2b6fe0"/>
<text x="1293.59" y="280.90" font-size="22" fill="#333" font-weight="normal" text-anchor="start" textLength="93.21" lengthAdjust="spacingAndGlyphs">Requests</text>
<text x="1253.81" y="370.10" font-size="65" fill="#333" font-weight="normal" text-anchor="start" textLength="169.49" lengthAdjust="spacingAndGlyphs" stroke="#fff" stroke-width="1.5">8,995</text>
<text x="1210.28" y="405.60" font-size="14.5" fill="#333" textLength="257.44" lengthAdjust="spacingAndGlyphs"><tspan font-weight="normal">YTD Opened Requests | </tspan><tspan font-weight="bold">Active:</tspan><tspan font-weight="normal"> 18,258</tspan></text>
<line x1="1183.6" y1="420.5" x2="1183.6" y2="528.5" stroke="#efefef" stroke-width="1.3"/>
<line x1="1220.1" y1="420.5" x2="1220.1" y2="528.5" stroke="#efefef" stroke-width="1.3"/>
<line x1="1257.8" y1="420.5" x2="1257.8" y2="528.5" stroke="#efefef" stroke-width="1.3"/>
<line x1="1294.5" y1="420.5" x2="1294.5" y2="528.5" stroke="#efefef" stroke-width="1.3"/>
<line x1="1331.0" y1="420.5" x2="1331.0" y2="528.5" stroke="#efefef" stroke-width="1.3"/>
<line x1="1368.2" y1="420.5" x2="1368.2" y2="528.5" stroke="#efefef" stroke-width="1.3"/>
<line x1="1404.7" y1="420.5" x2="1404.7" y2="528.5" stroke="#efefef" stroke-width="1.3"/>
<line x1="1441.3" y1="420.5" x2="1441.3" y2="528.5" stroke="#efefef" stroke-width="1.3"/>
<line x1="1477.9" y1="420.5" x2="1477.9" y2="528.5" stroke="#efefef" stroke-width="1.3"/>
<line x1="1515.2" y1="420.5" x2="1515.2" y2="528.5" stroke="#efefef" stroke-width="1.3"/>
<line x1="1552.3" y1="420.5" x2="1552.3" y2="528.5" stroke="#efefef" stroke-width="1.3"/>
<line x1="1146.7" y1="426.4" x2="1589.0" y2="426.4" stroke="#efefef" stroke-width="1.3"/>
<line x1="1146.7" y1="461.0" x2="1589.0" y2="461.0" stroke="#efefef" stroke-width="1.3"/>
<line x1="1146.7" y1="494.3" x2="1589.0" y2="494.3" stroke="#efefef" stroke-width="1.3"/>
<text x="1111.03" y="434.20" font-size="12.7" fill="#9a9a9a" font-weight="normal" text-anchor="start" textLength="28.37" lengthAdjust="spacingAndGlyphs">1500</text>
<text x="1109.79" y="466.00" font-size="12.7" fill="#9a9a9a" font-weight="normal" text-anchor="start" textLength="29.64" lengthAdjust="spacingAndGlyphs">1000</text>
<text x="1117.17" y="499.00" font-size="12.7" fill="#9a9a9a" font-weight="normal" text-anchor="start" textLength="22.26" lengthAdjust="spacingAndGlyphs">500</text>
<text x="1131.44" y="522.70" font-size="12.7" fill="#9a9a9a" font-weight="normal" text-anchor="start" textLength="8.03" lengthAdjust="spacingAndGlyphs">0</text>
<text x="1164.00" y="547.40" font-size="11" fill="#8f8f8f" font-weight="normal" text-anchor="middle">J</text>
<text x="1200.90" y="547.40" font-size="11" fill="#8f8f8f" font-weight="normal" text-anchor="middle">F</text>
<text x="1237.80" y="547.40" font-size="11" fill="#8f8f8f" font-weight="normal" text-anchor="middle">M</text>
<text x="1274.70" y="547.40" font-size="11" fill="#8f8f8f" font-weight="normal" text-anchor="middle">A</text>
<text x="1311.60" y="547.40" font-size="11" fill="#8f8f8f" font-weight="normal" text-anchor="middle">M</text>
<text x="1348.50" y="547.40" font-size="11" fill="#8f8f8f" font-weight="normal" text-anchor="middle">J</text>
<text x="1385.40" y="547.40" font-size="11" fill="#8f8f8f" font-weight="normal" text-anchor="middle">J</text>
<text x="1422.30" y="547.40" font-size="11" fill="#8f8f8f" font-weight="normal" text-anchor="middle">A</text>
<text x="1459.20" y="547.40" font-size="11" fill="#8f8f8f" font-weight="normal" text-anchor="middle">S</text>
<text x="1496.10" y="547.40" font-size="11" fill="#8f8f8f" font-weight="normal" text-anchor="middle">O</text>
<text x="1533.00" y="547.40" font-size="11" fill="#8f8f8f" font-weight="normal" text-anchor="middle">N</text>
<text x="1569.90" y="547.40" font-size="11" fill="#8f8f8f" font-weight="normal" text-anchor="middle">D</text>
<polyline points="1164.0,463.7 1201.0,468.6 1237.7,461.3 1275.0,467.0 1310.8,462.1 1348.7,433.7 1385.2,427.2 1421.8,433.7" fill="none" stroke="#8cc4bc" stroke-width="5" stroke-linejoin="round" stroke-linecap="round"/>
<polyline points="1164.0,462.1 1201.0,470.2 1237.7,463.4 1275.0,462.6 1310.8,464.2 1348.7,463.4 1385.2,462.6 1421.8,466.2 1459.2,464.2 1496.6,467.8 1532.3,463.4 1569.7,464.0" fill="none" stroke="#c4bcb9" stroke-width="5" stroke-linejoin="round" stroke-linecap="round"/>
<polyline points="1164.0,462.1 1201.0,470.2 1237.7,463.4 1275.0,462.6 1310.8,464.2" fill="none" stroke="#aaaaaa" stroke-width="5" stroke-linejoin="round" stroke-linecap="round"/>
<text x="1429.91" y="439.00" font-size="14.3" fill="#7dbab2" font-weight="bold" text-anchor="start" textLength="31.51" lengthAdjust="spacingAndGlyphs">2017</text>
<text x="1555.40" y="486.50" font-size="14.3" fill="#c2bab7" font-weight="bold" text-anchor="start" textLength="31.81" lengthAdjust="spacingAndGlyphs">2016</text>
<text x="1094.35" y="581.30" font-size="14" fill="#333" font-weight="bold" text-anchor="start" textLength="89.91" lengthAdjust="spacingAndGlyphs">Overdue: 97%</text>
<rect x="1095.6" y="604.7" width="488" height="20.8" fill="#fff" stroke="#cdcdcd" stroke-width="1.5"/>
<rect x="1095.6" y="604.7" width="472.4" height="20.8" fill="#5b5f69"/>
<text x="1259.46" y="676.50" font-size="13" fill="#666" font-weight="normal" text-anchor="start" textLength="59.86" lengthAdjust="spacingAndGlyphs">Made SLA?</text>
<text x="1324.46" y="676.40" font-size="15.5" fill="#333" font-weight="bold" text-anchor="start" textLength="96.20" lengthAdjust="spacingAndGlyphs">100% of Total</text>
<rect x="1088.8" y="705.4" width="500.2" height="33.2" fill="#f1f1f1"/>
<polygon points="1187.35,716.00 1189.12,720.39 1193.70,720.77 1190.21,723.87 1191.27,728.50 1187.35,726.02 1183.43,728.50 1184.49,723.87 1181.00,720.77 1185.58,720.39" fill="#2b6fe0"/>
<text x="1205.41" y="728.80" font-size="14" fill="#333" font-weight="normal" text-anchor="start" textLength="288.88" lengthAdjust="spacingAndGlyphs">YTD Top 10 Items by Requests and YoY Change</text>
<rect x="1246.0" y="742.0" width="169.8" height="232.6" fill="#fdfdfd"/>
<rect x="1415.8" y="742.0" width="2.9" height="232.6" fill="#f5f5f5"/>
<rect x="1418.7" y="742.0" width="166.3" height="232.6" fill="#fdfdfd"/>
<rect x="1246.0" y="974.6" width="339.0" height="2.2" fill="#f8f8f8"/>
<line x1="1246.0" y1="766.2" x2="1415.8" y2="766.2" stroke="#f3f3f3" stroke-width="1.2"/>
<line x1="1418.7" y1="766.2" x2="1585.0" y2="766.2" stroke="#f3f3f3" stroke-width="1.2"/>
<line x1="1246.0" y1="789.5" x2="1415.8" y2="789.5" stroke="#f3f3f3" stroke-width="1.2"/>
<line x1="1418.7" y1="789.5" x2="1585.0" y2="789.5" stroke="#f3f3f3" stroke-width="1.2"/>
<line x1="1246.0" y1="812.7" x2="1415.8" y2="812.7" stroke="#f3f3f3" stroke-width="1.2"/>
<line x1="1418.7" y1="812.7" x2="1585.0" y2="812.7" stroke="#f3f3f3" stroke-width="1.2"/>
<line x1="1246.0" y1="836.2" x2="1415.8" y2="836.2" stroke="#f3f3f3" stroke-width="1.2"/>
<line x1="1418.7" y1="836.2" x2="1585.0" y2="836.2" stroke="#f3f3f3" stroke-width="1.2"/>
<line x1="1246.0" y1="858.7" x2="1415.8" y2="858.7" stroke="#f3f3f3" stroke-width="1.2"/>
<line x1="1418.7" y1="858.7" x2="1585.0" y2="858.7" stroke="#f3f3f3" stroke-width="1.2"/>
<line x1="1246.0" y1="882.0" x2="1415.8" y2="882.0" stroke="#f3f3f3" stroke-width="1.2"/>
<line x1="1418.7" y1="882.0" x2="1585.0" y2="882.0" stroke="#f3f3f3" stroke-width="1.2"/>
<line x1="1246.0" y1="905.2" x2="1415.8" y2="905.2" stroke="#f3f3f3" stroke-width="1.2"/>
<line x1="1418.7" y1="905.2" x2="1585.0" y2="905.2" stroke="#f3f3f3" stroke-width="1.2"/>
<line x1="1246.0" y1="928.2" x2="1415.8" y2="928.2" stroke="#f3f3f3" stroke-width="1.2"/>
<line x1="1418.7" y1="928.2" x2="1585.0" y2="928.2" stroke="#f3f3f3" stroke-width="1.2"/>
<line x1="1246.0" y1="952.0" x2="1415.8" y2="952.0" stroke="#f3f3f3" stroke-width="1.2"/>
<line x1="1418.7" y1="952.0" x2="1585.0" y2="952.0" stroke="#f3f3f3" stroke-width="1.2"/>
<rect x="1248.0" y="744.5" width="130.8" height="20.0" fill="#4a9690"/>
<text x="1150.87" y="760.00" font-size="12.8" fill="#7a7a7a" font-weight="normal" text-anchor="start" textLength="89.83" lengthAdjust="spacingAndGlyphs">Carpet Cleaning</text>
<text x="1383.30" y="759.30" font-size="12.5" fill="#3f8c86" font-weight="bold" text-anchor="start" textLength="21.68" lengthAdjust="spacingAndGlyphs">229</text>
<rect x="1248.0" y="768.0" width="129.5" height="19.5" fill="#4a9690"/>
<text x="1150.85" y="783.25" font-size="12.8" fill="#7a7a7a" font-weight="normal" text-anchor="start" textLength="89.90" lengthAdjust="spacingAndGlyphs">Company portal</text>
<text x="1382.06" y="782.55" font-size="12.5" fill="#3f8c86" font-weight="bold" text-anchor="start" textLength="21.34" lengthAdjust="spacingAndGlyphs">228</text>
<rect x="1248.0" y="791.2" width="128.2" height="19.2" fill="#4a9690"/>
<text x="1182.91" y="806.38" font-size="12.8" fill="#7a7a7a" font-weight="normal" text-anchor="start" textLength="57.47" lengthAdjust="spacingAndGlyphs">Fireworks</text>
<text x="1380.80" y="805.67" font-size="12.5" fill="#3f8c86" font-weight="bold" text-anchor="start" textLength="21.67" lengthAdjust="spacingAndGlyphs">226</text>
<rect x="1248.0" y="814.5" width="127.0" height="19.5" fill="#4a9690"/>
<text x="1165.08" y="829.75" font-size="12.8" fill="#7a7a7a" font-weight="normal" text-anchor="start" textLength="75.25" lengthAdjust="spacingAndGlyphs">Asus G Series</text>
<text x="1379.55" y="829.05" font-size="12.5" fill="#3f8c86" font-weight="bold" text-anchor="start" textLength="21.56" lengthAdjust="spacingAndGlyphs">225</text>
<rect x="1248.0" y="838.0" width="127.0" height="19.5" fill="#4a9690"/>
<text x="1106.58" y="853.25" font-size="12.8" fill="#7a7a7a" font-weight="normal" text-anchor="start" textLength="134.12" lengthAdjust="spacingAndGlyphs">Packaging and Shipping</text>
<text x="1379.56" y="852.55" font-size="12.5" fill="#3f8c86" font-weight="bold" text-anchor="start" textLength="21.26" lengthAdjust="spacingAndGlyphs">224</text>
<rect x="1248.0" y="860.5" width="125.0" height="19.0" fill="#4a9690"/>
<text x="1168.79" y="875.50" font-size="12.8" fill="#7a7a7a" font-weight="normal" text-anchor="start" textLength="71.65" lengthAdjust="spacingAndGlyphs">Copy Service</text>
<text x="1377.55" y="874.80" font-size="12.5" fill="#3f8c86" font-weight="bold" text-anchor="start" textLength="21.56" lengthAdjust="spacingAndGlyphs">221</text>
<rect x="1248.0" y="883.8" width="122.8" height="19.2" fill="#4a9690"/>
<text x="1125.22" y="898.88" font-size="12.8" fill="#7a7a7a" font-weight="normal" text-anchor="start" textLength="115.47" lengthAdjust="spacingAndGlyphs">Telephone Extension</text>
<text x="1375.31" y="898.17" font-size="12.5" fill="#3f8c86" font-weight="bold" text-anchor="start" textLength="21.41" lengthAdjust="spacingAndGlyphs">216</text>
<rect x="1248.0" y="907.0" width="122.8" height="19.2" fill="#4a9690"/>
<text x="1130.98" y="922.12" font-size="12.8" fill="#7a7a7a" font-weight="normal" text-anchor="start" textLength="109.46" lengthAdjust="spacingAndGlyphs">Assign Office Space</text>
<text x="1375.31" y="921.42" font-size="12.5" fill="#3f8c86" font-weight="bold" text-anchor="start" textLength="21.41" lengthAdjust="spacingAndGlyphs">216</text>
<rect x="1248.0" y="930.0" width="122.8" height="19.5" fill="#4a9690"/>
<text x="1156.70" y="945.25" font-size="12.8" fill="#7a7a7a" font-weight="normal" text-anchor="start" textLength="83.74" lengthAdjust="spacingAndGlyphs">Office Desktop</text>
<text x="1375.31" y="944.55" font-size="12.5" fill="#3f8c86" font-weight="bold" text-anchor="start" textLength="21.41" lengthAdjust="spacingAndGlyphs">216</text>
<rect x="1248.0" y="953.8" width="121.5" height="18.8" fill="#4a9690"/>
<text x="1108.58" y="968.62" font-size="12.8" fill="#7a7a7a" font-weight="normal" text-anchor="start" textLength="131.78" lengthAdjust="spacingAndGlyphs">Apple MacBook Pro 15”</text>
<text x="1374.06" y="967.92" font-size="12.5" fill="#3f8c86" font-weight="bold" text-anchor="start" textLength="21.00" lengthAdjust="spacingAndGlyphs">214</text>
<rect x="1505.5" y="744.5" width="70.2" height="20.0" fill="#f0735a"/>
<text x="1517.51" y="759.10" font-size="12" fill="#fde3da" font-weight="bold" text-anchor="start" textLength="46.57" lengthAdjust="spacingAndGlyphs">-10.20%</text>
<rect x="1575.2" y="768.0" width="2.0" height="19.5" fill="#cfcfcf"/>
<text x="1549.50" y="782.35" font-size="12" fill="#9a9a9a" font-weight="bold" text-anchor="start" textLength="35.83" lengthAdjust="spacingAndGlyphs">0.44%</text>
<rect x="1558.0" y="791.2" width="17.8" height="19.2" fill="#f8ab9a"/>
<text x="1545.76" y="805.48" font-size="12" fill="#b8604e" font-weight="bold" text-anchor="start" textLength="39.57" lengthAdjust="spacingAndGlyphs">-2.59%</text>
<rect x="1480.0" y="814.5" width="95.8" height="19.5" fill="#e04848"/>
<text x="1504.51" y="828.85" font-size="12" fill="#fbd6d6" font-weight="bold" text-anchor="start" textLength="46.57" lengthAdjust="spacingAndGlyphs">-13.79%</text>
<rect x="1561.2" y="838.0" width="14.5" height="19.5" fill="#f8ab9a"/>
<text x="1545.76" y="852.35" font-size="12" fill="#b8604e" font-weight="bold" text-anchor="start" textLength="39.57" lengthAdjust="spacingAndGlyphs">-2.18%</text>
<rect x="1508.0" y="860.5" width="67.8" height="19.0" fill="#f0735a"/>
<text x="1522.01" y="874.60" font-size="12" fill="#fde3da" font-weight="bold" text-anchor="start" textLength="39.57" lengthAdjust="spacingAndGlyphs">-9.80%</text>
<rect x="1482.5" y="883.8" width="93.2" height="19.2" fill="#e04848"/>
<text x="1506.25" y="897.98" font-size="12" fill="#fbd6d6" font-weight="bold" text-anchor="start" textLength="47.33" lengthAdjust="spacingAndGlyphs">-13.60%</text>
<rect x="1482.5" y="907.0" width="93.2" height="19.2" fill="#e04848"/>
<text x="1506.25" y="921.23" font-size="12" fill="#fbd6d6" font-weight="bold" text-anchor="start" textLength="47.33" lengthAdjust="spacingAndGlyphs">-13.60%</text>
<rect x="1470.0" y="930.0" width="105.8" height="19.5" fill="#dc3a48"/>
<text x="1499.51" y="944.35" font-size="12" fill="#fbd6d6" font-weight="bold" text-anchor="start" textLength="47.08" lengthAdjust="spacingAndGlyphs">-15.29%</text>
<rect x="1424.5" y="953.8" width="151.2" height="18.8" fill="#a50f3a"/>
<text x="1476.51" y="967.73" font-size="12" fill="#e0507a" font-weight="bold" text-anchor="start" textLength="46.82" lengthAdjust="spacingAndGlyphs">-21.90%</text>
<line x1="0.0" y1="998.0" x2="1600.0" y2="998.0" stroke="#f2f2f2" stroke-width="1.5"/>
</svg></body></html>
